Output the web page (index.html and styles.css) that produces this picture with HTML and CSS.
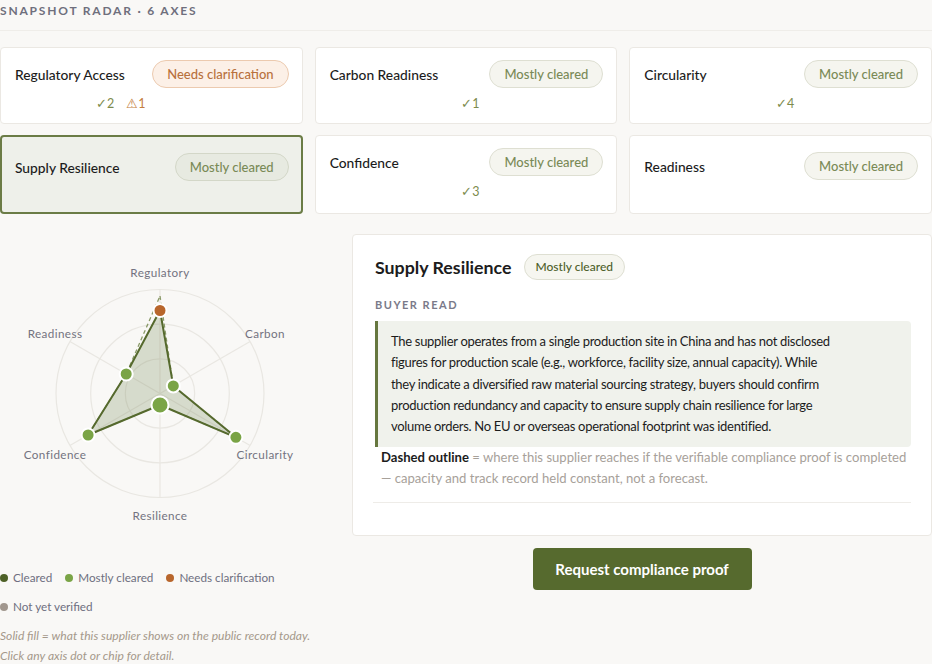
FILE: index.html
```html
<!DOCTYPE html>
<html lang="en">
<head>
    <meta charset="UTF-8">
    <meta name="viewport" content="width=device-width, initial-scale=1.0">
    <title>Snapshot Radar</title>
    <link rel="stylesheet" href="styles.css">
</head>
<body>
    <div class="section-head">SNAPSHOT RADAR · 6 AXES</div>

    <div class="axis-grid">
        <div class="card">
            <div class="card-head">
                <span class="card-title">Regulatory Access</span>
                <span class="pill pill-warn">Needs clarification</span>
            </div>
            <div class="counts counts-left"><span class="ok">✓2</span><span class="warn">⚠1</span></div>
        </div>
        <div class="card">
            <div class="card-head">
                <span class="card-title">Carbon Readiness</span>
                <span class="pill">Mostly cleared</span>
            </div>
            <div class="counts"><span class="ok">✓1</span></div>
        </div>
        <div class="card">
            <div class="card-head">
                <span class="card-title">Circularity</span>
                <span class="pill">Mostly cleared</span>
            </div>
            <div class="counts"><span class="ok">✓4</span></div>
        </div>
        <div class="card card-plain selected">
            <div class="card-head">
                <span class="card-title">Supply Resilience</span>
                <span class="pill">Mostly cleared</span>
            </div>
        </div>
        <div class="card">
            <div class="card-head">
                <span class="card-title">Confidence</span>
                <span class="pill">Mostly cleared</span>
            </div>
            <div class="counts"><span class="ok">✓3</span></div>
        </div>
        <div class="card card-plain">
            <div class="card-head">
                <span class="card-title">Readiness</span>
                <span class="pill">Mostly cleared</span>
            </div>
        </div>
    </div>

    <div class="main">
        <div class="radar-col">
            <svg class="radar" width="320" height="300" viewBox="0 0 320 300">
                <!-- rings -->
                <g fill="none" stroke="#e9e7e2" stroke-width="1.2">
                    <circle cx="160" cy="159.5" r="34.7"/>
                    <circle cx="160" cy="159.5" r="69.3"/>
                    <circle cx="160" cy="159.5" r="104"/>
                    <line x1="160" y1="159.5" x2="160" y2="55.5"/>
                    <line x1="160" y1="159.5" x2="250.1" y2="107.5"/>
                    <line x1="160" y1="159.5" x2="250.1" y2="211.5"/>
                    <line x1="160" y1="159.5" x2="160" y2="263.5"/>
                    <line x1="160" y1="159.5" x2="69.9" y2="211.5"/>
                    <line x1="160" y1="159.5" x2="69.9" y2="107.5"/>
                </g>
                <!-- dashed outline: reachable with proof -->
                <polygon points="160,62 173.3,151.9 235.9,203.3 160,171 88.1,201 126.2,140" fill="none" stroke="#8a9a68" stroke-width="1.3" stroke-dasharray="4 3"/>
                <!-- solid fill: public record today -->
                <polygon points="160,76.5 173.3,151.9 235.9,203.3 160,171 88.1,201 126.2,140" fill="rgba(110,130,80,0.25)" stroke="#55692d" stroke-width="2" stroke-linejoin="round"/>
                <g stroke="#fff" stroke-width="2">
                    <circle cx="160" cy="76.5" r="6.5" fill="#b8662c"/>
                    <circle cx="173.3" cy="151.9" r="6.5" fill="#7aa446"/>
                    <circle cx="235.9" cy="203.3" r="6.5" fill="#7aa446"/>
                    <circle cx="160" cy="171" r="8.5" fill="#7aa446"/>
                    <circle cx="88.1" cy="201" r="6.5" fill="#7aa446"/>
                    <circle cx="126.2" cy="140" r="6.5" fill="#7aa446"/>
                </g>
                <g class="axis-label" text-anchor="middle">
                    <text x="160" y="43">Regulatory</text>
                    <text x="265" y="104">Carbon</text>
                    <text x="265" y="225">Circularity</text>
                    <text x="160" y="286">Resilience</text>
                    <text x="55" y="225">Confidence</text>
                    <text x="55" y="104">Readiness</text>
                </g>
            </svg>

            <div class="legend">
                <span class="key"><i class="dot dot-cleared"></i>Cleared</span>
                <span class="key"><i class="dot dot-mostly"></i>Mostly cleared</span>
                <span class="key"><i class="dot dot-needs"></i>Needs clarification</span>
                <span class="key"><i class="dot dot-unverified"></i>Not yet verified</span>
            </div>
            <p class="note">Solid fill = what this supplier shows on the public record today.<br>Click any axis dot or chip for detail.</p>
        </div>

        <div class="detail-col">
            <div class="detail">
                <div class="detail-head">
                    <h2>Supply Resilience</h2>
                    <span class="pill pill-small">Mostly cleared</span>
                </div>
                <div class="label">BUYER READ</div>
                <div class="read"><p>The supplier operates from a single production site in China and has not disclosed figures for production scale (e.g., workforce, facility size, annual capacity). While they indicate a diversified raw material sourcing strategy, buyers should confirm production redundancy and capacity to ensure supply chain resilience for large volume orders. No EU or overseas operational footprint was identified.</p></div>
                <p class="dashed-note"><b>Dashed outline</b> = where this supplier reaches if the verifiable compliance proof is completed<br>— capacity and track record held constant, not a forecast.</p>
                <div class="divider"></div>
            </div>
            <button class="cta">Request compliance proof</button>
        </div>
    </div>
</body>
</html>
```

FILE: styles.css
```css
body {
    margin: 0;
    background: #f9f8f6;
    font-family: Lato, "Open Sans", sans-serif;
    color: #1c1c1c;
    overflow: hidden;
}

.section-head {
    padding: 2px 0 11px;
    font-size: 12px;
    font-weight: 700;
    letter-spacing: 1.8px;
    color: #6f6f7d;
    border-bottom: 1px solid #efede9;
    line-height: 17px;
}

.axis-grid {
    display: grid;
    grid-template-columns: repeat(3, 1fr);
    gap: 11px 12px;
    margin-top: 16px;
}

.card {
    background: #fff;
    border: 1px solid #ebe8e3;
    border-radius: 4px;
    padding: 12px 13px 11px 14px;
    display: flex;
    flex-direction: column;
}
.card-plain { padding-top: 16px; padding-bottom: 31px; }
.card.selected {
    background: #eef0ea;
    border: 2px solid #6b7c46;
    padding-left: 13px;
    padding-right: 12px;
}

.card-head {
    display: flex;
    align-items: center;
    justify-content: space-between;
}
.card-title { font-size: 13.8px; font-weight: 500; }

.pill {
    font-size: 13px;
    font-weight: 500;
    line-height: 26px;
    padding: 0 14px;
    border-radius: 14px;
    border: 1px solid #dedfd2;
    background: #f5f5ef;
    color: #7a8a57;
}
.selected .pill { background: #e7eae1; border-color: #d3d7c8; }
.pill-warn {
    background: #fcf0e7;
    border-color: #eccaaf;
    color: #b8713d;
}

.counts {
    display: flex;
    justify-content: center;
    gap: 12px;
    margin-top: 8px;
    padding-left: 8px;
    font-size: 12.5px;
    line-height: 16px;
}
.counts-left { padding-right: 70px; }
.ok { color: #7d8b4d; }
.warn { color: #c47d3e; }

.main {
    display: grid;
    grid-template-columns: 320px 1fr;
    gap: 32px;
    margin-top: 20px;
}

.radar { display: block; }
.axis-label text {
    font-family: Lato, "Open Sans", sans-serif;
    font-size: 11.7px;
    fill: #737380;
    letter-spacing: 0.4px;
}

.legend {
    display: flex;
    flex-wrap: wrap;
    gap: 8px 13px;
    margin-top: 33px;
    font-size: 11.7px;
    color: #6e6f80;
    line-height: 21px;
}
.key { display: flex; align-items: center; }
.dot {
    display: inline-block;
    width: 8px;
    height: 8px;
    border-radius: 50%;
    margin-right: 5px;
}
.dot-cleared { background: #4e6127; }
.dot-mostly { background: #7aa446; }
.dot-needs { background: #b8662c; }
.dot-unverified { background: #a1978e; }

.note {
    margin: 9px 0 0;
    font-size: 12.1px;
    font-style: italic;
    color: #a5998b;
    line-height: 20px;
}

.detail {
    background: #fff;
    border: 1px solid #ebe8e3;
    border-radius: 4px;
    padding: 19px 20px 32px;
}
.detail-head {
    display: flex;
    align-items: center;
    gap: 12px;
    padding-left: 2px;
}
.detail-head h2 {
    margin: 0;
    font-size: 17.8px;
    font-weight: 700;
}
.pill-small {
    font-size: 12px;
    line-height: 24px;
    padding: 0 11px;
    color: #4e5f2b;
    background: #f6f6f0;
}

.label {
    margin: 18px 0 0 2px;
    font-size: 11px;
    line-height: 14px;
    font-weight: 700;
    letter-spacing: 1.5px;
    color: #7a7a89;
}

.read {
    margin: 9px 0 0 2px;
    padding: 10px 18px 10px 13px;
    background: #f0f2ec;
    border-left: 3px solid #66773f;
    border-radius: 0 4px 4px 0;
}
.read p {
    margin: 0;
    max-width: 446px;
    font-size: 13px;
    letter-spacing: -0.3px;
    line-height: 21.3px;
}

.dashed-note {
    margin: 0 0 0 8px;
    font-size: 13.1px;
    line-height: 21px;
    color: #a7a19a;
    white-space: nowrap;
}
.dashed-note b { color: #1c1c1c; font-weight: 700; }

.divider {
    margin-top: 13px;
    border-top: 1px solid #eeece8;
}

.cta {
    display: block;
    margin: 12px auto 0;
    width: 219px;
    height: 42px;
    background: #566a2e;
    color: #fff;
    border: none;
    border-radius: 4px;
    font-family: Lato, "Open Sans", sans-serif;
    font-size: 15px;
    font-weight: 700;
    cursor: pointer;
}
```
